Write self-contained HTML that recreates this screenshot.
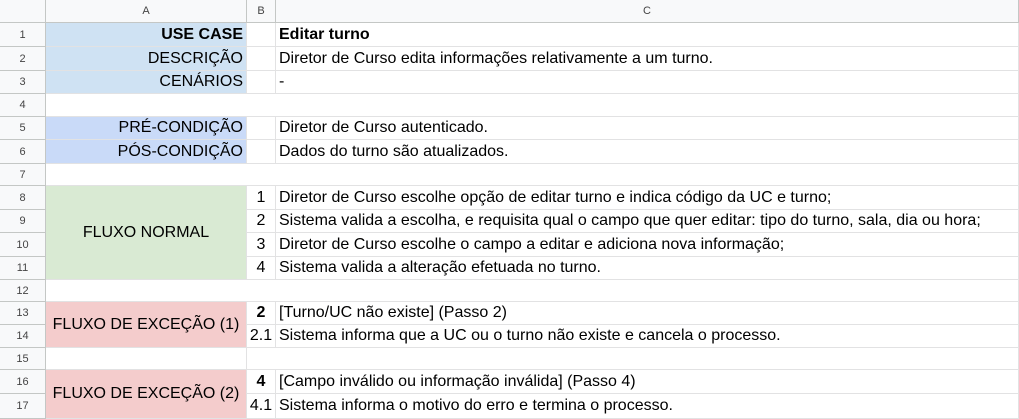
<!DOCTYPE html>
<html><head><meta charset="utf-8"><style>
*{margin:0;padding:0;box-sizing:border-box}
body{width:1019px;height:419px;overflow:hidden;background:#fff;font-family:"Liberation Sans",Arial,sans-serif;position:relative}
.c{position:absolute;border-right:1px solid #e2e2e3;border-bottom:1px solid #e2e2e3;font-size:16px;color:#000;white-space:nowrap;overflow:hidden;display:flex;align-items:center;padding:0 3px}
.h{background:#f8f9fa;color:#444;font-size:11px;justify-content:center;border-color:#c4c7c5}
.r{justify-content:flex-end}
.m{justify-content:center}
.b{font-weight:bold}
</style></head><body>
<div id="g"></div>
<script>
const ys=[0,23,47,71,94,117,140,164,186,210,233,257,280,302,325,348,370,394,419];
let html='';
function cell(x1,x2,y1,y2,txt,cls,bg){html+=`<div class="c ${cls||''}" style="left:${x1}px;top:${y1}px;width:${x2-x1}px;height:${y2-y1}px;${bg?'background:'+bg+';':''}">${txt||''}</div>`;}
cell(0,46,0,23,'','h');cell(46,247,0,23,'A','h');cell(247,276,0,23,'B','h');cell(276,1019,0,23,'C','h');
for(let i=1;i<=17;i++)cell(0,46,ys[i],ys[i+1],i,'h');
const LB='#cfe2f3',BL='#c9daf8',GR='#d9ead3',RD='#f4cccc';
function row(i,a,b,c,abg,bold){cell(46,247,ys[i],ys[i+1],a,'r'+(bold?' b':''),abg);cell(247,276,ys[i],ys[i+1],b,'m');cell(276,1019,ys[i],ys[i+1],c,bold?'b':'');}
row(1,'USE CASE','','Editar turno',LB,true);
row(2,'DESCRIÇÃO','','Diretor de Curso edita informações relativamente a um turno.',LB);
row(3,'CENÁRIOS','','-',LB);
cell(46,1019,ys[4],ys[5]);
row(5,'PRÉ-CONDIÇÃO','','Diretor de Curso autenticado.',BL);
row(6,'PÓS-CONDIÇÃO','','Dados do turno são atualizados.',BL);
cell(46,1019,ys[7],ys[8]);
cell(46,247,ys[8],ys[12],'FLUXO NORMAL','m',GR);
const fn=['Diretor de Curso escolhe opção de editar turno e indica código da UC e turno;','Sistema valida a escolha, e requisita qual o campo que quer editar: tipo do turno, sala, dia ou hora;','Diretor de Curso escolhe o campo a editar e adiciona nova informação;','Sistema valida a alteração efetuada no turno.'];
for(let k=0;k<4;k++){cell(247,276,ys[8+k],ys[9+k],k+1,'m');cell(276,1019,ys[8+k],ys[9+k],fn[k]);}
cell(46,1019,ys[12],ys[13]);
cell(46,247,ys[13],ys[15],'FLUXO DE EXCEÇÃO (1)','m',RD);
cell(247,276,ys[13],ys[14],'2','m b');cell(276,1019,ys[13],ys[14],'[Turno/UC não existe] (Passo 2)');
cell(247,276,ys[14],ys[15],'2.1','m');cell(276,1019,ys[14],ys[15],'Sistema informa que a UC ou o turno não existe e cancela o processo.');
cell(46,247,ys[15],ys[16]);cell(247,1019,ys[15],ys[16]);
cell(46,247,ys[16],ys[18],'FLUXO DE EXCEÇÃO (2)','m',RD);
cell(247,276,ys[16],ys[17],'4','m b');cell(276,1019,ys[16],ys[17],'[Campo inválido ou informação inválida] (Passo 4)');
cell(247,276,ys[17],ys[18],'4.1','m');cell(276,1019,ys[17],ys[18],'Sistema informa o motivo do erro e termina o processo.');
document.getElementById('g').innerHTML=html;
</script>
</body></html>
